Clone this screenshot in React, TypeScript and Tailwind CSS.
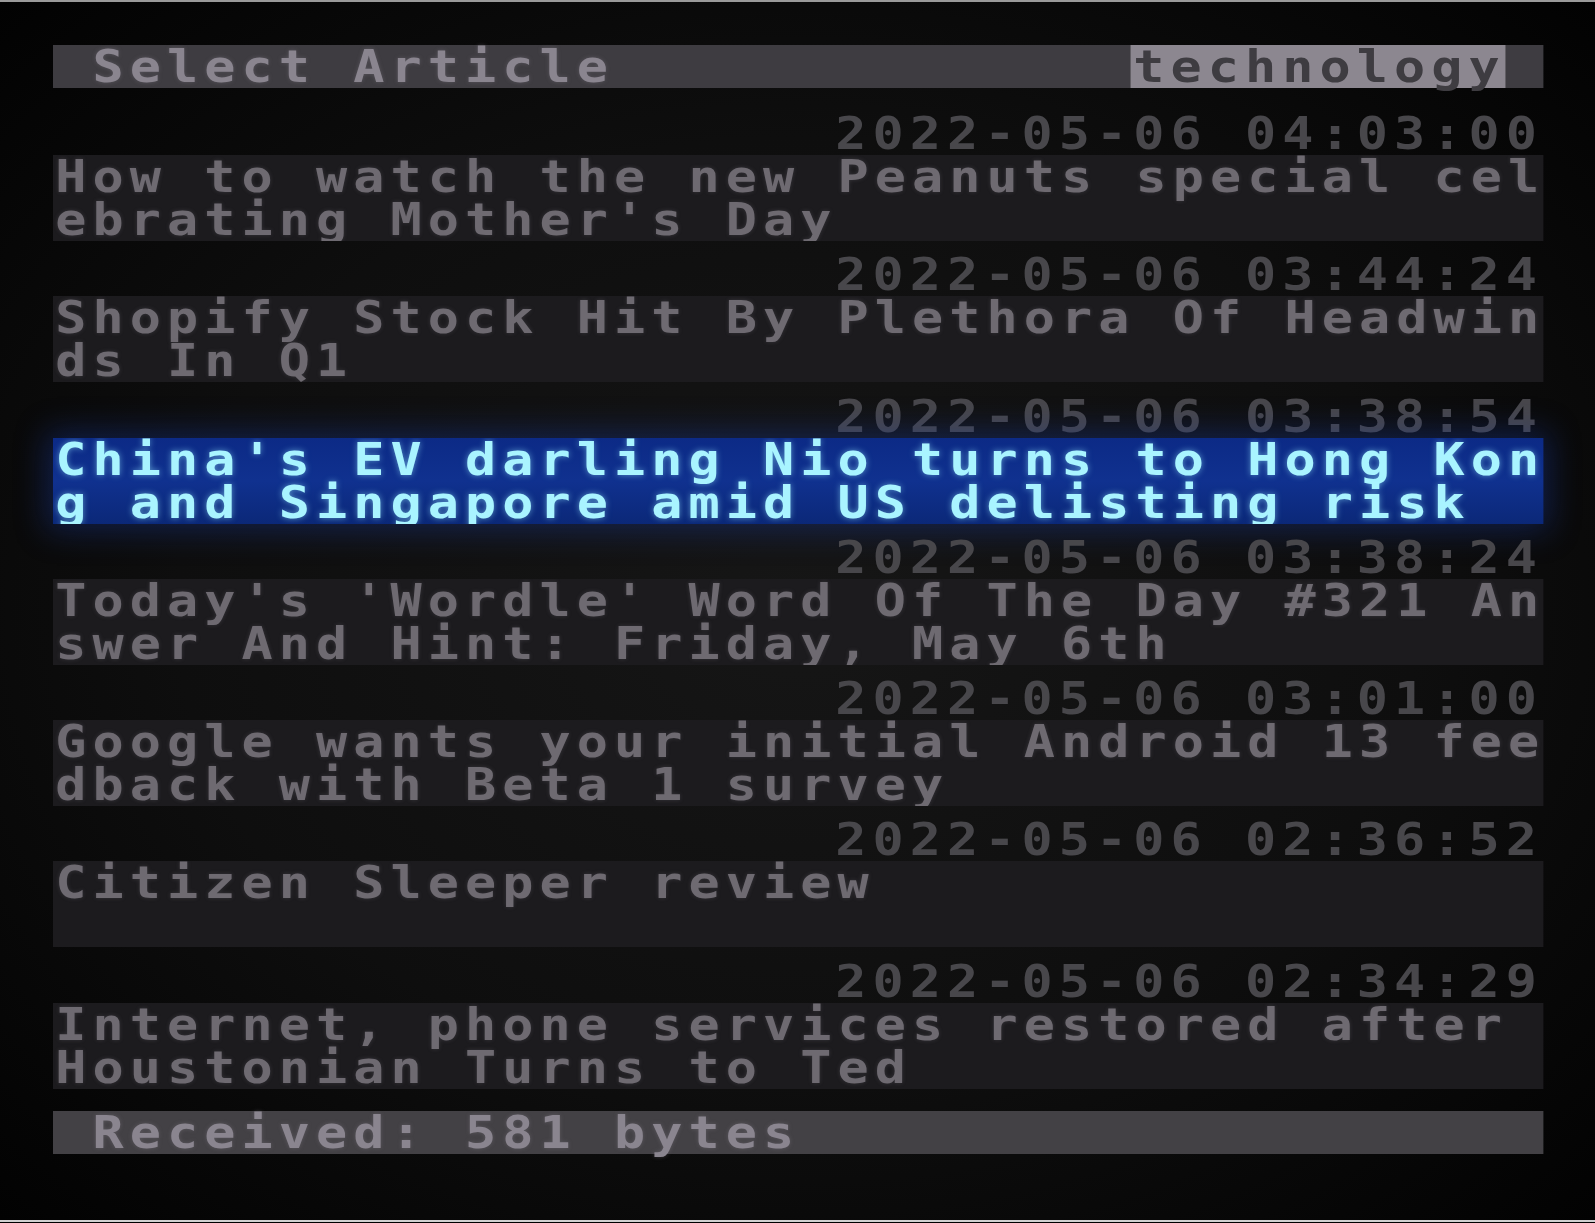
import React from 'react';

interface Article {
  date: string;
  lines: [string, string];
}

const articles: Article[] = [
  { date: '2022-05-06 04:03:00', lines: ['How to watch the new Peanuts special cel', "ebrating Mother's Day"] },
  { date: '2022-05-06 03:44:24', lines: ['Shopify Stock Hit By Plethora Of Headwin', 'ds In Q1'] },
  { date: '2022-05-06 03:38:54', lines: ["China's EV darling Nio turns to Hong Kon", 'g and Singapore amid US delisting risk'] },
  { date: '2022-05-06 03:38:24', lines: ["Today's 'Wordle' Word Of The Day #321 An", 'swer And Hint: Friday, May 6th'] },
  { date: '2022-05-06 03:01:00', lines: ['Google wants your initial Android 13 fee', 'dback with Beta 1 survey'] },
  { date: '2022-05-06 02:36:52', lines: ['Citizen Sleeper review', ''] },
  { date: '2022-05-06 02:34:29', lines: ['Internet, phone services restored after ', 'Houstonian Turns to Ted'] },
];

const SELECTED = 2;

// 40 columns; the whole screen is stretched 1.15x wide so each cell ends up 37.25px
const mono =
  "font-['DejaVu_Sans_Mono','Liberation_Mono',monospace] font-bold text-[45px] leading-[43px] tracking-[5.3px] whitespace-pre";

export default function App() {
  return (
    <div className="flex h-[1223px] w-full flex-col overflow-hidden bg-black">
      <div className="h-[2px] bg-[#9a9a9a]" />

      <div className="flex-1 bg-[radial-gradient(ellipse_at_center,#161616_0%,#0e0e0e_55%,#020202_100%)] pt-[43px]">
        <div className={`ml-[53px] w-[1295.65px] origin-left scale-x-[1.15] ${mono}`}>
          {/* Header */}
          <div className="flex h-[43px] bg-[#3e3c41] text-[#8a858f] [text-shadow:0_0_4px_rgba(140,135,145,0.35)]">
            <span className="pl-[2px]"> Select Article</span>
            <span className="ml-auto bg-[#8c8790] pl-[2px] text-[#3e3c41] [text-shadow:none]">technology</span>
            <span className="w-[32.39px]" />
          </div>

          {/* Articles */}
          <div className="mt-[24px] flex flex-col gap-[12.3px]">
            {articles.map((a, i) => {
              const selected = i === SELECTED;
              return (
                <div key={a.date} className="flex flex-col">
                  <div className="h-[43px] text-right text-[#48474b]">{a.date}</div>
                  <div
                    className={
                      selected
                        ? 'h-[86px] overflow-hidden bg-[linear-gradient(180deg,#0c2a86_0%,#10318f_50%,#0b2878_100%)] pl-[2px] text-[#a9f4ff] shadow-[0_0_28px_6px_rgba(25,55,150,0.45)] [text-shadow:0_0_6px_rgba(150,235,255,0.55)]'
                        : 'h-[86px] overflow-hidden bg-[#1c1b1e] pl-[2px] text-[#6e6a71] [text-shadow:0_0_4px_rgba(120,115,125,0.3)]'
                    }
                  >
                    <div>{a.lines[0]}</div>
                    <div>{a.lines[1]}</div>
                  </div>
                </div>
              );
            })}
          </div>

          {/* Status */}
          <div className="mt-[22px] h-[43px] bg-[#434145] pl-[2px] text-[#8a858f] [text-shadow:0_0_4px_rgba(140,135,145,0.35)]">
            {' Received: 581 bytes'}
          </div>
        </div>
      </div>

      <div className="h-[2px] bg-[#d0d0d0]" />
      <div className="h-px bg-black" />
    </div>
  );
}
